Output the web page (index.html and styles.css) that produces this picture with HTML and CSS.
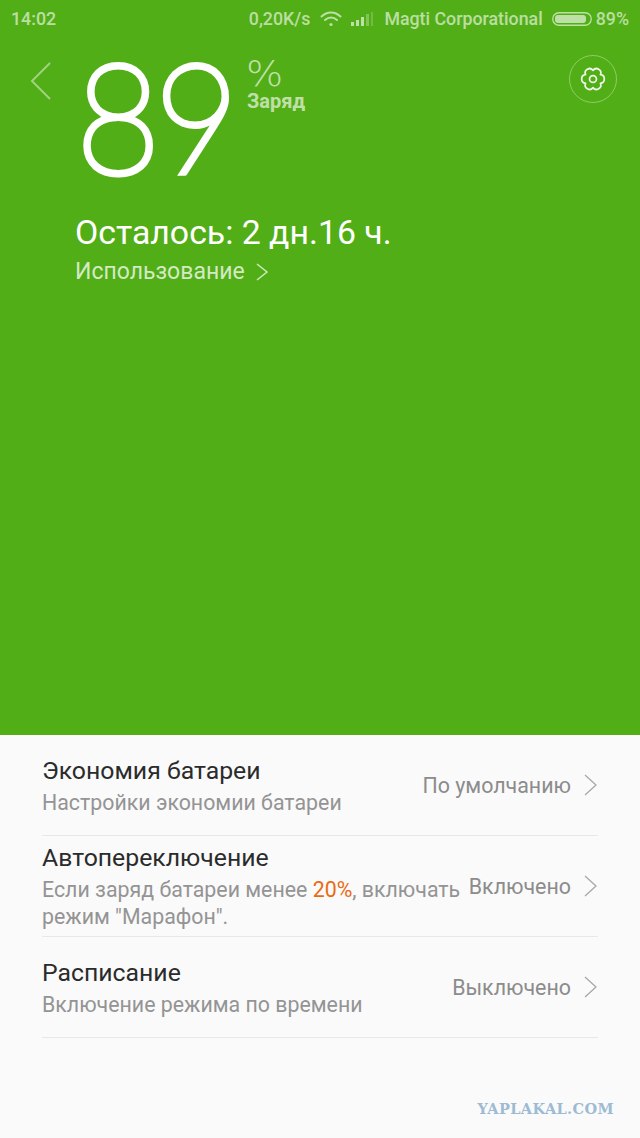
FILE: index.html
```html
<!DOCTYPE html>
<html lang="ru">
<head>
    <meta charset="UTF-8">
    <title>Батарея</title>
    <link rel="stylesheet" href="styles.css">
</head>
<body>
    <div class="screen">
        <section class="battery-panel">
            <div class="statusbar">
                <span class="clock">14:02</span>
                <div class="status-right">
                    <span>0,20K/s</span>
                    <svg class="wifi" width="22" height="18" viewBox="0 0 22 18" fill="none" stroke="currentColor" stroke-width="2" stroke-linecap="round">
                        <path d="M1.5 6.5 C7 1 15 1 20.5 6.5"/>
                        <path d="M5 10 C8.5 6.8 13.5 6.8 17 10"/>
                        <circle cx="11" cy="14.5" r="1.6" fill="currentColor" stroke="none"/>
                    </svg>
                    <svg class="signal" width="24" height="16" viewBox="0 0 24 16" fill="currentColor">
                        <rect x="0" y="11" width="3" height="4"/>
                        <rect x="5" y="9" width="3" height="6"/>
                        <rect x="10" y="6" width="3" height="9"/>
                        <rect x="15" y="3" width="3" height="12" opacity="0.45"/>
                        <rect x="20" y="1" width="2" height="14" opacity="0.3"/>
                    </svg>
                    <span class="carrier">Magti Corporational</span>
                    <svg class="battery" width="40" height="16" viewBox="0 0 40 16">
                        <rect x="0.75" y="1.75" width="38.5" height="12.5" rx="6.2" fill="none" stroke="currentColor" stroke-width="1.3"/>
                        <rect x="3" y="4" width="31" height="8" rx="3" fill="currentColor"/>
                    </svg>
                    <span>89%</span>
                </div>
            </div>

            <div class="hero">
                <svg class="back" width="24" height="40" viewBox="0 0 24 40" fill="none" stroke="currentColor" stroke-width="2">
                    <path d="M21 2 L3 20 L21 38"/>
                </svg>
                <div class="charge">89</div>
                <div class="unit">
                    <span class="percent">%</span>
                    <span class="unit-label">Заряд</span>
                </div>
                <button class="settings">
                    <svg width="26" height="26" viewBox="0 0 30 30" fill="none" stroke="currentColor" stroke-width="2" stroke-linejoin="round">
                        <path d="M23.6 10.03 A5 5 0 0 1 23.6 19.97 A5 5 0 0 1 15 24.93 A5 5 0 0 1 6.4 19.97 A5 5 0 0 1 6.4 10.03 A5 5 0 0 1 15 5.07 A5 5 0 0 1 23.6 10.03 Z"/>
                        <circle cx="15" cy="15" r="4"/>
                    </svg>
                </button>
            </div>

            <div class="remaining">Осталось: 2 дн.16 ч.</div>
            <div class="usage">
                Использование
                <svg width="14" height="20" viewBox="0 0 14 20" fill="none" stroke="currentColor" stroke-width="1.4">
                    <path d="M2 2 L12 10 L2 18"/>
                </svg>
            </div>
        </section>

        <section class="options">
            <div class="option">
                <div class="option-text">
                    <div class="option-title">Экономия батареи</div>
                    <div class="option-desc">Настройки экономии батареи</div>
                </div>
                <span class="option-value">По умолчанию</span>
                <svg class="chevron" width="15" height="24" viewBox="0 0 15 24" fill="none" stroke="currentColor" stroke-width="1.3"><path d="M2 2 L13 12 L2 22"/></svg>
            </div>
            <div class="option">
                <div class="option-text">
                    <div class="option-title">Автопереключение</div>
                    <div class="option-desc">Если заряд батареи менее <em>20%</em>, включать<br>режим "Марафон".</div>
                </div>
                <span class="option-value">Включено</span>
                <svg class="chevron" width="15" height="24" viewBox="0 0 15 24" fill="none" stroke="currentColor" stroke-width="1.3"><path d="M2 2 L13 12 L2 22"/></svg>
            </div>
            <div class="option">
                <div class="option-text">
                    <div class="option-title">Расписание</div>
                    <div class="option-desc">Включение режима по времени</div>
                </div>
                <span class="option-value">Выключено</span>
                <svg class="chevron" width="15" height="24" viewBox="0 0 15 24" fill="none" stroke="currentColor" stroke-width="1.3"><path d="M2 2 L13 12 L2 22"/></svg>
            </div>
        </section>

        <div class="watermark">YAPLAKAL.COM</div>
    </div>
</body>
</html>
```

FILE: styles.css
```css
* {
    margin: 0;
    padding: 0;
    box-sizing: border-box;
}

body {
    font-family: Roboto, "Noto Sans", sans-serif;
    background: #fafafa;
}

.screen {
    position: relative;
    width: 640px;
    height: 1138px;
    overflow: hidden;
    display: flex;
    flex-direction: column;
}

/* Green battery panel */
.battery-panel {
    height: 735px;
    background: #52ae16;
    color: white;
}

.statusbar {
    height: 37px;
    padding: 0 11px;
    display: flex;
    justify-content: space-between;
    align-items: center;
    font-size: 17.8px;
    font-weight: 500;
    color: rgba(255, 255, 255, 0.62);
}

.status-right {
    display: flex;
    align-items: center;
}

.wifi {
    margin-left: 10px;
}

.signal {
    margin-left: 9px;
}

.carrier {
    margin-left: 9px;
}

.battery {
    margin-left: 9px;
    margin-right: 4px;
}

.hero {
    height: 175px;
    padding-right: 23px;
    display: flex;
    align-items: flex-start;
}

.back {
    margin: 24px 0 0 29px;
    color: rgba(255, 255, 255, 0.45);
}

.charge {
    margin: 21px 0 0 23px;
    width: 156px;
    font-family: Lato, sans-serif;
    font-weight: 100;
    font-size: 153px;
    line-height: 112px;
    letter-spacing: -6px;
    -webkit-text-stroke: 6px white;
    transform: scaleX(0.95);
    transform-origin: left;
}

.unit {
    margin: 22px 0 0 15px;
    display: flex;
    flex-direction: column;
    align-items: flex-start;
    color: rgba(255, 255, 255, 0.65);
}

.percent {
    margin-left: -1px;
    font-family: "DejaVu Sans", sans-serif;
    font-weight: 200;
    font-size: 35px;
    line-height: 30px;
    transform: scaleX(1.12);
    transform-origin: left;
}

.unit-label {
    margin-top: 2px;
    font-size: 20px;
    font-weight: 700;
    line-height: 20px;
}

.settings {
    margin: 18px 0 0 auto;
    width: 48px;
    height: 48px;
    border: 1px solid rgba(255, 255, 255, 0.35);
    border-radius: 50%;
    background: none;
    color: rgba(255, 255, 255, 0.9);
    display: flex;
    justify-content: center;
    align-items: center;
}

.remaining {
    margin-left: 75px;
    font-size: 33.8px;
    line-height: 42px;
}

.usage {
    margin: 3px 0 0 75px;
    font-size: 23px;
    line-height: 30px;
    color: rgba(255, 255, 255, 0.75);
    display: flex;
    align-items: center;
    gap: 10px;
}

/* Settings list */
.options {
    padding: 0 42px;
}

.option {
    min-height: 101px;
    border-bottom: 1px solid #e8e8e8;
    display: flex;
    align-items: center;
}

.option-text {
    flex: 1;
}

.option-title {
    margin-bottom: 2px;
    font-size: 24.8px;
    line-height: 32px;
    color: #2b2b2b;
}

.option-desc {
    font-size: 21.35px;
    line-height: 27px;
    color: #949494;
}

.option-desc em {
    font-style: normal;
    color: #ea6a12;
}

.option-value {
    margin-left: 8px;
    font-size: 21.4px;
    color: #8c8c8c;
    white-space: nowrap;
}

.chevron {
    margin-left: 12px;
    color: #a8a8a8;
}

.watermark {
    position: absolute;
    right: 26px;
    top: 1100px;
    font-family: "DejaVu Serif", serif;
    font-size: 14.5px;
    font-weight: 700;
    letter-spacing: 0.4px;
    color: #9dbbd3;
}
```
